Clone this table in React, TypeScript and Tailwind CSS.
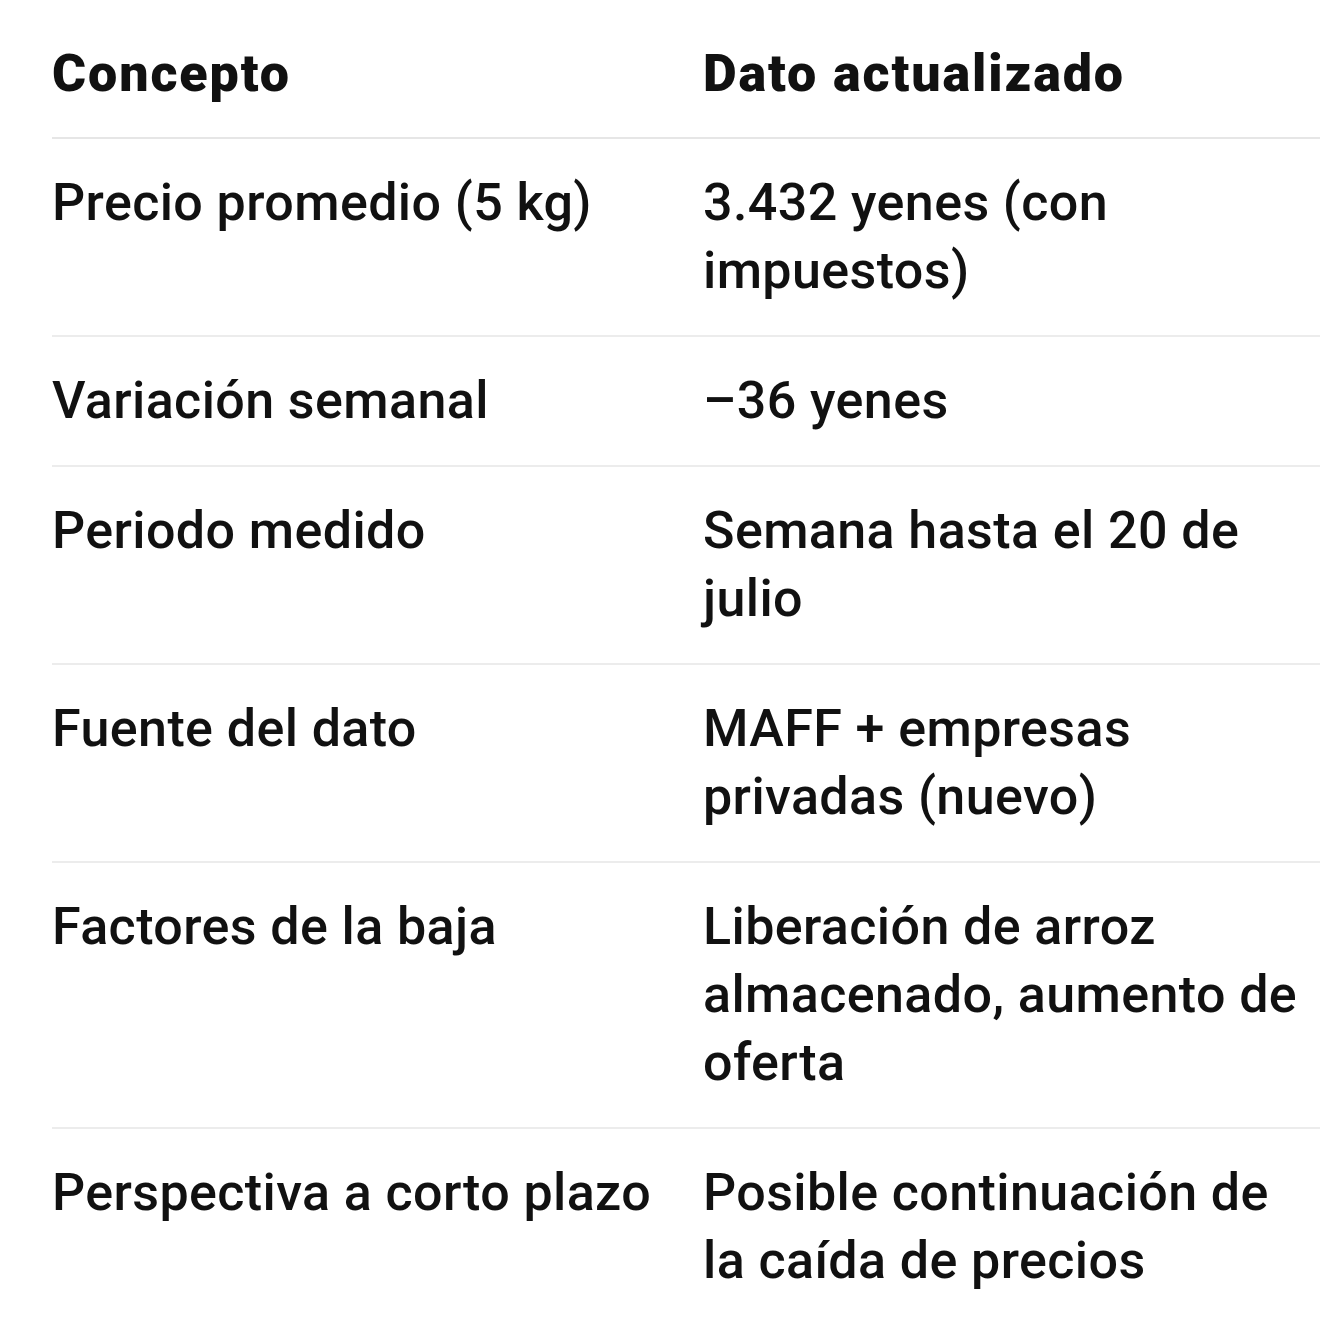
import React from 'react';

const rows: [string, string][] = [
  ['Precio promedio (5 kg)', '3.432 yenes (con impuestos)'],
  ['Variación semanal', '–36 yenes'],
  ['Periodo medido', 'Semana hasta el 20 de julio'],
  ['Fuente del dato', 'MAFF + empresas privadas (nuevo)'],
  ['Factores de la baja', 'Liberación de arroz almacenado, aumento de oferta'],
  ['Perspectiva a corto plazo', 'Posible continuación de la caída de precios'],
];

export default function App() {
  return (
    <div
      className="w-[1320px] h-[1329px] overflow-hidden bg-white pl-[52px] pt-[40px] text-[#111111]"
      style={{ fontFamily: 'Roboto, "Liberation Sans", sans-serif' }}
    >
      <div className="w-[1400px]">
        <div className="grid grid-cols-[651px_600px] border-b-2 border-[#e6e6e6] pb-[29px] text-[52px] leading-[68px] font-black tracking-[1.9px]">
          <div>Concepto</div>
          <div>Dato actualizado</div>
        </div>
        {rows.map(([concept, value], i) => (
          <div
            key={concept}
            className={
              i < rows.length - 1
                ? 'grid grid-cols-[651px_600px] border-b-2 border-[#ececec] py-[30px] text-[52px] leading-[68px] font-medium tracking-[0.4px]'
                : 'grid grid-cols-[651px_600px] py-[30px] text-[52px] leading-[68px] font-medium tracking-[0.4px]'
            }
          >
            <div>{concept}</div>
            <div>{value}</div>
          </div>
        ))}
      </div>
    </div>
  );
}
